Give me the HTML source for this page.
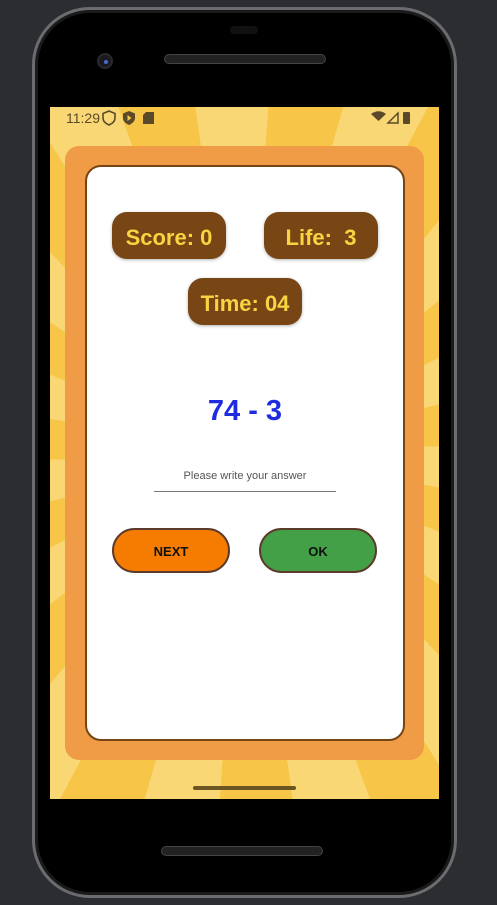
<!DOCTYPE html>
<html><head><meta charset="utf-8"><style>
*{margin:0;padding:0;box-sizing:border-box}
body{width:497px;height:905px;background:#2b2d31;position:relative;overflow:hidden;font-family:"Liberation Sans",sans-serif}
.phone{position:absolute;left:32px;top:7px;width:425px;height:891px;border-radius:58px;background:#000;border:3px solid #6a6c70;box-shadow:inset 0 0 0 3px #1a1a1a}
.screen{position:absolute;left:50px;top:107px;width:389px;height:692px;overflow:hidden;
background:repeating-conic-gradient(from 4deg at 194px 346px,#f7c548 0deg 12deg,#f8d774 12deg 24deg)}
.frame{position:absolute;left:15px;top:39px;width:359px;height:614px;background:#f09c47;border-radius:14px}
.card{position:absolute;left:20px;top:19px;width:320px;height:576px;background:#fff;border:2px solid #754515;border-radius:16px}
.pill{position:absolute;height:47px;width:114px;background:#774614;border-radius:15px;color:#f9d342;font-weight:bold;font-size:22px;line-height:51px;text-align:center;box-shadow:0 1px 3px rgba(0,0,0,.3)}
.btn{position:absolute;width:118px;height:45px;border:2px solid #5b3b2b;border-radius:23px;font-weight:bold;font-size:13px;line-height:43px;text-align:center;color:#111}
.sb{position:absolute;top:3px;font-size:14px;color:#5a4a2a}
</style></head><body>
<div class="phone"></div>
<div style="position:absolute;left:230px;top:26px;width:28px;height:8px;border-radius:4px;background:#111"></div>
<div style="position:absolute;left:97px;top:53px;width:16px;height:16px;border-radius:50%;background:#1a1a1e;border:2px solid #2a2a2e"></div>
<div style="position:absolute;left:104px;top:60px;width:4px;height:4px;border-radius:50%;background:#4a6ad0"></div>
<div style="position:absolute;left:164px;top:54px;width:162px;height:10px;border-radius:5px;background:#222;border:1px solid #444"></div>
<div style="position:absolute;left:161px;top:846px;width:162px;height:10px;border-radius:5px;background:#222;border:1px solid #444"></div>
<div class="screen">
<div class="sb" style="left:16px">11:29</div>
<svg style="position:absolute;left:52px;top:3px" width="60" height="16" viewBox="0 0 60 16">
<path d="M7 1 L13 3.5 V8 C13 11 10.5 13.5 7 15 C3.5 13.5 1 11 1 8 V3.5 Z" fill="none" stroke="#5a4a2a" stroke-width="1.6"/>
<path d="M27 1 L33 3.5 V8 C33 11 30.5 13.5 27 15 C23.5 13.5 21 11 21 8 V3.5 Z" fill="#5a4a2a"/>
<path d="M25.5 5 L29.5 8 L25.5 11Z" fill="#f7c548"/>
<path d="M44 2 H52 V14 H41 V5 Z" fill="#5a4a2a"/>
</svg>
<svg style="position:absolute;left:321px;top:3px" width="60" height="16" viewBox="0 0 60 16">
<path d="M0 4 Q7.5 -1.5 15 4 L7.5 11 Z" fill="#5a4a2a"/>
<path d="M17 13 L27 3 V13 Z" fill="none" stroke="#5a4a2a" stroke-width="1.5"/>
<rect x="32" y="2" width="7" height="12" rx="1" fill="#5a4a2a"/>
</svg>
<div class="frame"><div class="card">
<div class="pill" style="left:25px;top:45px">Score: 0</div>
<div class="pill" style="left:177px;top:45px">Life:&nbsp; 3</div>
<div class="pill" style="left:101px;top:111px">Time:&nbsp;04</div>
<div style="position:absolute;left:0;width:316px;top:228px;text-align:center;color:#1e2be0;font-weight:bold;font-size:29px">74 - 3</div>
<div style="position:absolute;left:67px;width:182px;top:303px;text-align:center;color:#555;font-size:11px">Please write your answer</div>
<div style="position:absolute;left:67px;width:182px;top:324px;height:1px;background:#777"></div>
<div class="btn" style="left:25px;top:361px;background:#f57c00">NEXT</div>
<div class="btn" style="left:172px;top:361px;background:#43a047">OK</div>
</div></div>
<div style="position:absolute;left:143px;top:679px;width:103px;height:4px;border-radius:2px;background:#6b5520"></div>
</div>
</body></html>
